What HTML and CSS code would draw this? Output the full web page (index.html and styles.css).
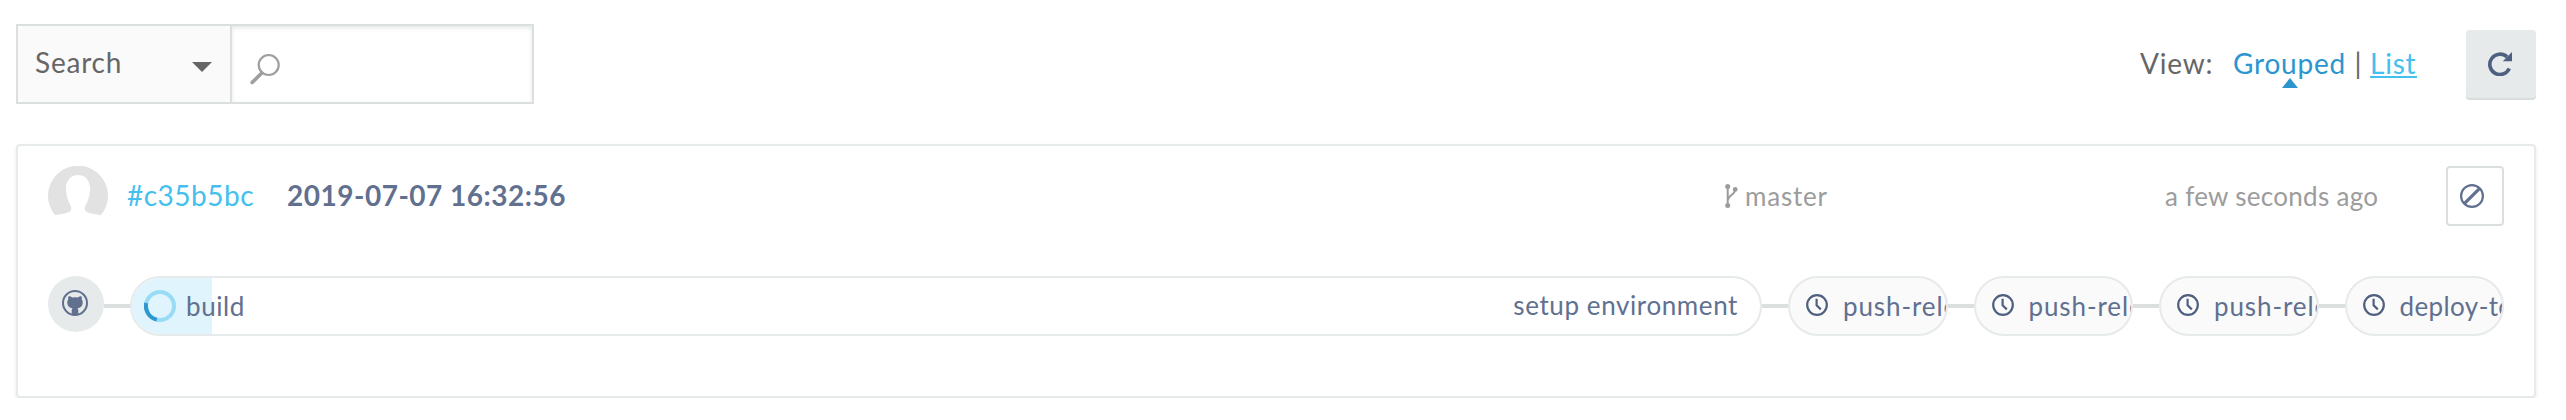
FILE: index.html
```html
<!DOCTYPE html>
<html lang="en">
<head>
<meta charset="utf-8">
<title>Pipelines</title>
<link rel="stylesheet" href="styles.css">
</head>
<body>
<svg width="0" height="0" class="defs">
  <symbol id="clock" viewBox="0 0 22 22">
    <circle cx="11" cy="11" r="9.8" fill="none" stroke="currentColor" stroke-width="2.2"/>
    <path d="M10.6 4.8V11.2L14.8 15.4" fill="none" stroke="currentColor" stroke-width="2.2"/>
  </symbol>
</svg>
<div class="page">
  <header class="toolbar">
    <div class="search">
      <div class="search-type">
        <span>Search</span>
        <svg class="caret" viewBox="0 0 20 10"><path d="M0 0H20L10 10Z"/></svg>
      </div>
      <div class="search-field">
        <svg class="glass" viewBox="0 0 30 32"><circle cx="18.7" cy="12" r="10" fill="none" stroke="currentColor" stroke-width="2.2"/><path d="M11.8 20L2.2 29.4" stroke="currentColor" stroke-width="3.6" stroke-linecap="round"/></svg>
      </div>
    </div>
    <div class="view">
      <span class="view-label">View:</span>
      <span class="view-current">Grouped<i class="marker"></i></span>
      <span class="view-sep">|</span>
      <a class="view-link">List</a>
      <div class="refresh">
        <svg width="24" height="24" viewBox="0 0 24 24"><path d="M21.3 16.6A10.2 10.2 0 1 1 19 4.9" fill="none" stroke="currentColor" stroke-width="3.6"/><path d="M24 0V9.2H14.8Z" fill="currentColor"/></svg>
      </div>
    </div>
  </header>

  <section class="card">
    <div class="run">
      <svg class="avatar" viewBox="0 0 60 60"><path d="M7.3 49.3A30 30 0 1 1 52.7 49.3C47 47.4 41 48.4 37.5 45C36 42.500 37 40 38.500 37.500C41 33 41.500 29 42 24C42.500 15.500 38 9 30 9C22 9 17.500 15.500 18 24C18.500 29 19 33 21.500 37.500C23 40 24 42.500 22.500 45C19 48.400 13 47.400 7.300 49.300Z" fill="#e2e2e2"/></svg>
      <a class="hash">#c35b5bc</a>
      <span class="date">2019-07-07 16:32:56</span>
      <span class="branch"><svg width="13" height="24" viewBox="0 0 13 24"><path d="M2.700 3V21M10.200 5.500C10.200 11 3 11 2.700 16.500" fill="none" stroke="currentColor" stroke-width="2"/><g fill="currentColor"><circle cx="2.700" cy="2.600" r="2.500"/><circle cx="2.700" cy="21.400" r="2.500"/><circle cx="10.200" cy="5.400" r="2.400"/></g></svg><span>master</span></span>
      <span class="ago">a few seconds ago</span>
      <div class="cancel"><svg width="24" height="24" viewBox="0 0 24 24"><g fill="none" stroke="currentColor"><circle cx="12" cy="12" r="10.900" stroke-width="2.200"/><path d="M4.300 19.700L19.700 4.300" stroke-width="3.200"/></g></svg></div>
    </div>

    <div class="pipeline">
      <div class="source"><svg width="26" height="26" viewBox="0 0 26 26"><circle cx="13" cy="13" r="12" fill="none" stroke="currentColor" stroke-width="2"/><path d="M6.500 6.200Q8.500 6 10.300 7.500Q13 6.900 15.700 7.500Q17.500 6 19.500 6.200Q20.100 7.500 19.700 9.200Q21 10.800 20.700 13.300C20.400 16.600 18.500 17.800 15.500 18.200Q16.300 19 16.300 20.300V24.800Q13 25.600 9.700 24.800V20.300Q9.700 19 10.500 18.200C7.500 17.800 5.600 16.600 5.300 13.300Q5 10.800 6.300 9.200Q5.900 7.500 6.500 6.200Z" fill="currentColor"/></svg></div>
      <i class="link"></i>
      <div class="stage running">
        <div class="progress"></div>
        <svg class="spinner" viewBox="0 0 32 32"><g fill="none" stroke-width="4"><circle cx="16" cy="16" r="14" stroke="#97dcf4"/><path d="M2.200 13A14 14 0 0 0 12.800 29.600" stroke="#2f97d0"/></g></svg>
        <span class="name">build</span>
        <span class="step">setup environment</span>
      </div>
      <i class="link"></i>
      <div class="stage waiting"><svg class="clock"><use href="#clock"/></svg><span class="name">push-release</span></div>
      <i class="link"></i>
      <div class="stage waiting"><svg class="clock"><use href="#clock"/></svg><span class="name">push-release</span></div>
      <i class="link"></i>
      <div class="stage waiting"><svg class="clock"><use href="#clock"/></svg><span class="name">push-release</span></div>
      <i class="link"></i>
      <div class="stage waiting deploy"><svg class="clock"><use href="#clock"/></svg><span class="name">deploy-to</span></div>
    </div>
  </section>
</div>
</body>
</html>
```
FILE: styles.css
```css
* { box-sizing: border-box; }
body {
  margin: 0;
  background: #fff;
  color: #666;
  font: 28px/40px Lato, sans-serif;
  letter-spacing: 0.8px;
  white-space: nowrap;
}
svg { display: block; flex: none; }
.defs { position: absolute; }
.page { padding: 24px 30px 0 16px; }

.toolbar { display: flex; justify-content: space-between; height: 120px; }
.search { display: flex; width: 518px; height: 80px; border: 2px solid #dbe0df; }
.search-type {
  display: flex;
  justify-content: space-between;
  width: 214px;
  padding: 16px 18px 0 17px;
  background: #fafafa;
  border-right: 2px solid #dbe0df;
}
.caret { width: 20px; height: 10px; margin-top: 20px; fill: #666; }
.search-field { flex: 1; padding: 27px 0 0 18px; box-shadow: inset 0 2px 4px #e3e8e8; }
.glass { width: 30px; height: 32px; color: #9f9f9f; }

.view { display: flex; padding-top: 19px; }
.view-label { width: 93px; }
.view-current { position: relative; width: 121.500px; color: #2c95cf; }
.marker {
  position: absolute;
  left: 49px;
  top: 35px;
  border: 8px solid transparent;
  border-top: 0;
  border-bottom: 10px solid #2c95cf;
}
.view-sep { width: 15.5px; }
.view-link {
  width: 47px;
  height: 35px;
  color: #45bfee;
  border-bottom: 2px solid #45bfee;
}
.refresh {
  width: 70px;
  height: 70px;
  margin: -13px 0 0 49px;
  padding: 22px;
  color: #4e5f80;
  background: #e6eaea;
  border-radius: 4px;
  box-shadow: inset 0 -2px 0 #d8dddd;
}

.card {
  height: 254px;
  padding: 20px 30px;
  border: 2px solid #e6eaea;
  border-radius: 4px;
  box-shadow: 0 2px 4px rgba(0, 0, 0, 0.09);
}
.run { display: flex; height: 110px; }
.avatar { width: 60px; height: 60px; }
.hash { width: 160px; margin: 9px 0 0 19px; color: #45bfee; letter-spacing: 0.5px; }
.date { margin-top: 9px; color: #61708f; font-weight: 700; letter-spacing: 0.5px; }
.branch { display: flex; gap: 7px; margin: 18px 0 0 auto; width: 440px; color: #9c9c9c; font-size: 26px; }
.branch span { margin-top: -8px; }
.ago { width: 281px; margin-top: 10px; color: #9c9c9c; font-size: 26px; letter-spacing: 0.3px; }
.cancel {
  width: 58px;
  height: 60px;
  padding: 16px 12px;
  color: #61708f;
  border: 2px solid #dbe0df;
  border-radius: 4px;
}

.pipeline { display: flex; color: #61708f; font-size: 26px; }
.source {
  flex: none;
  width: 56px;
  height: 56px;
  padding: 14px;
  background: #e6eaea;
  border-radius: 50%;
}
.link { flex: none; width: 26px; height: 4px; margin-top: 28px; background: #dbe0df; }
.stage {
  position: relative;
  display: flex;
  height: 60px;
  overflow: hidden;
  border: 2px solid #e6eaea;
  border-radius: 30px;
}
.running { flex: 1; padding: 0 22px 0 12px; letter-spacing: 0.6px; }
.progress { position: absolute; left: 0; top: 0; width: 80px; height: 100%; background: #dff4fc; }
.spinner { position: relative; width: 32px; height: 32px; margin: 12px 10px 0 0; }
.name { position: relative; margin-top: 8px; }
.step { margin: 7px 0 0 auto; }
.waiting { flex: none; width: 159.5px; padding-left: 16px; background: #fafafa; letter-spacing: 0.9px; }
.deploy { letter-spacing: 0.4px; }
.clock { width: 22px; height: 22px; margin: 16px 15px 0 0; color: #4e5f80; }
```
